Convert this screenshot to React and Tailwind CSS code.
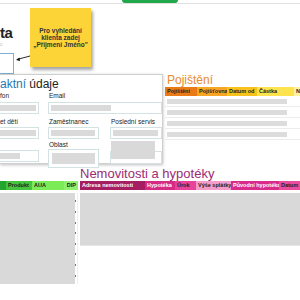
import React from 'react';

const font = { fontFamily: '"Liberation Sans", Arial, sans-serif' };

// Text field mockup: outlined box with a grey placeholder bar
const Field = ({ w, bar, cut }) => (
  <div
    className={`h-[12px] bg-white border border-[#d3e2e2] ${cut ? 'border-l-0' : ''}`}
    style={{ width: w }}
  >
    <div className={`h-[6px] mt-[2px] bg-[#dadada] ${cut ? '' : 'ml-[2px]'}`} style={{ width: bar }} />
  </div>
);

const insuranceCols = [
  { label: 'Pojištění', w: 32, bg: 'bg-[#ea7a16]' },
  { label: 'Pojišťovna', w: 30, bg: 'bg-[#f6a623]' },
  { label: 'Datum od', w: 30, bg: 'bg-[#f8c21c]' },
  { label: 'Částka', w: 37, bg: 'bg-[#fde44e]' },
  { label: 'N', w: 40, bg: 'bg-[#fff1a6]' },
];

const propertyCols = [
  { label: 'Adresa nemovitosti', w: 65, bg: 'bg-[#a61e62]', light: true },
  { label: 'Hypotéka', w: 30, bg: 'bg-[#d62b84]', light: true },
  { label: 'Úrok', w: 21, bg: 'bg-[#e8439a]' },
  { label: 'Výše splátky', w: 35, bg: 'bg-[#f49dcb]' },
  { label: 'Původní hypotéka', w: 48, bg: 'bg-[#d92b8b]', light: true },
  { label: 'Datum', w: 30, bg: 'bg-[#ea4c9e]' },
];

const productCols = [
  { label: '', w: 6, bg: 'bg-[#23a530]' },
  { label: 'Produkt', w: 26, bg: 'bg-[#47c43d]' },
  { label: 'AUA', w: 32, bg: 'bg-[#7bec58]' },
  { label: 'DIP', w: 14, bg: 'bg-[#8ff06e]', right: true },
];

const HeaderCell = ({ c }) => (
  <div
    className={`h-full shrink-0 flex items-center px-[2px] text-[5.5px] font-bold leading-none whitespace-nowrap ${c.bg} ${c.light ? 'text-white' : 'text-[#222]'} ${c.right ? 'justify-end' : ''}`}
    style={{ width: c.w }}
  >
    {c.label}
  </div>
);

export default function App() {
  return (
    <div className="relative w-[300px] h-[300px] overflow-hidden bg-white text-[#222]" style={font}>
      {/* tab strip */}
      <div className="h-[4px] flex border-b border-[#e2e2e2]">
        <div className="w-[122px]" />
        <div className="w-[56px] h-[3px] bg-[#22a84a] rounded-b-[3px]" />
      </div>

      {/* search header */}
      <div className="h-[70px] flex">
        <div className="w-[15px] flex flex-col">
          <div className="mt-[21px] text-[15px] font-bold leading-[15px] tracking-tight">ta</div>
          <div className="text-[5px] text-[#bbb] leading-[6px] mt-[1px]">c</div>
          <div className="mt-[6px] w-[14px] h-[21px] border border-[#7eb1d3] border-l-0" />
        </div>
      </div>

      {/* contact panel + insurance */}
      <div className="h-[92px] flex items-start">
        <div className="w-[166px] h-[90px] bg-white border border-l-0 border-[#cfcfcf] shadow-[0_1px_3px_rgba(0,0,0,0.25)]">
          <div className="text-[12px] leading-[14px] mt-[2px] whitespace-nowrap">
            <span className="text-[#1f77b4]">aktní</span> údaje
          </div>
          <div className="flex text-[6.5px] leading-[8px] h-[8px] mt-[1px]">
            <div className="w-[49px]">fon</div>
            <div>Email</div>
          </div>
          <div className="flex mt-[2px]">
            <div className="w-[48px]"><Field w={39} bar={36} cut /></div>
            <Field w={114} bar={60} />
          </div>
          <div className="flex text-[6.5px] leading-[8px] h-[8px] mt-[4px]">
            <div className="w-[49px]">et dětí</div>
            <div className="w-[62px]">Zaměstnanec</div>
            <div>Poslední servis</div>
          </div>
          <div className="flex mt-[1px]">
            <div className="w-[48px]"><Field w={39} bar={36} cut /></div>
            <div className="w-[62px]"><Field w={51} bar={44} /></div>
            <Field w={52} bar={45} />
          </div>
          <div className="flex items-start mt-[2px]">
            <div className="w-[48px] pt-[9px]"><Field w={39} bar={20} cut /></div>
            <div className="w-[62px]">
              <div className="text-[6.5px] leading-[8px] h-[8px] pl-[1px]">Oblast</div>
              <div className="w-[51px] h-[19px] bg-white border border-[#d3e2e2] pt-[3px] px-[3px]">
                <div className="h-[11px] bg-[#dadada]" />
              </div>
            </div>
            <div className="flex flex-col">
              <div className="relative z-10 w-[44px] h-[18px] ml-[1px] bg-[#d9d9d9]" />
              <div className="w-[52px] h-[13px] mt-[-8px] border border-[#d3e2e2] bg-white" />
            </div>
          </div>
        </div>

        <div className="ml-[2px] flex flex-col">
          <div className="text-[12px] leading-[13px] text-[#e98a2e] pl-[2px]">Pojištění</div>
          <div className="h-[9px] flex">
            {insuranceCols.map((c) => (
              <HeaderCell key={c.label} c={c} />
            ))}
          </div>
          {[0, 1, 2, 3].map((r) => (
            <div key={r} className="h-[11px] border-b border-[#ececec] flex items-center pl-[2px]">
              <div className="w-[120px] h-[5px] bg-[#dcdcdc]" />
            </div>
          ))}
        </div>
      </div>

      {/* products + real estate */}
      <div className="flex items-start">
        <div className="w-[80px] pt-[15px]">
          <div className="h-[9px] flex">
            {productCols.map((c, i) => (
              <HeaderCell key={i} c={c} />
            ))}
          </div>
          <div className="flex mt-[3px]">
            <div className="w-[75px] h-[91px] bg-[#d9d9d9]" />
            <div className="w-[3px] flex flex-col justify-around py-[3px] border-r border-[#eee]">
              {[0, 1, 2, 3, 4, 5, 6, 7].map((t) => (
                <div key={t} className="w-[1px] h-[2px] bg-[#777]" />
              ))}
            </div>
          </div>
        </div>

        <div className="ml-[2px] flex flex-col">
          <div className="text-[13px] leading-[15px] text-[#9b2b74] whitespace-nowrap">Nemovitosti a hypotéky</div>
          <div className="h-[9px] flex">
            {propertyCols.map((c) => (
              <HeaderCell key={c.label} c={c} />
            ))}
          </div>
          <div className="mt-[3px] w-[220px] h-[53px] bg-[#d9d9d9] border-b border-[#e6e6e6]" />
        </div>
      </div>

      {/* sticky note annotation */}
      <div className="absolute left-[30px] top-[8px] w-[61px] h-[59px] bg-[#fcd437] shadow-[2px_3px_3px_rgba(0,0,0,0.35)] flex flex-col items-center justify-center text-[6.5px] font-bold leading-[7px] text-center text-[#333]">
        <div>Pro vyhledání</div>
        <div>klienta zadej</div>
        <div>„Příjmení Jméno"</div>
      </div>
      <svg className="absolute left-[14px] top-[54px]" width="17" height="8" viewBox="0 0 17 8">
        <line x1="16" y1="2" x2="3" y2="5.5" stroke="#111" strokeWidth="0.9" />
        <path d="M2 6 L5.5 3.6 L6 7 Z" fill="#111" />
      </svg>
    </div>
  );
}
